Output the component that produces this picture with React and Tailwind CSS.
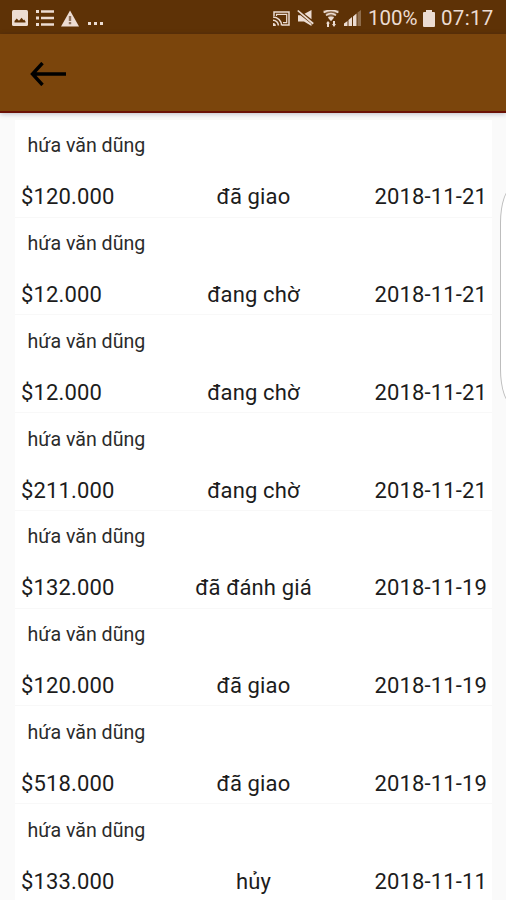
import React from 'react';

const orders = [
  { id: 1, name: 'hứa văn dũng', price: '$120.000', status: 'đã giao', date: '2018-11-21' },
  { id: 2, name: 'hứa văn dũng', price: '$12.000', status: 'đang chờ', date: '2018-11-21' },
  { id: 3, name: 'hứa văn dũng', price: '$12.000', status: 'đang chờ', date: '2018-11-21' },
  { id: 4, name: 'hứa văn dũng', price: '$211.000', status: 'đang chờ', date: '2018-11-21' },
  { id: 5, name: 'hứa văn dũng', price: '$132.000', status: 'đã đánh giá', date: '2018-11-19' },
  { id: 6, name: 'hứa văn dũng', price: '$120.000', status: 'đã giao', date: '2018-11-19' },
  { id: 7, name: 'hứa văn dũng', price: '$518.000', status: 'đã giao', date: '2018-11-19' },
  { id: 8, name: 'hứa văn dũng', price: '$133.000', status: 'hủy', date: '2018-11-11' },
];

const StatusBar = () => (
  <div className="flex h-[34px] items-center bg-[#5e3206] pl-3 pr-3 pt-0.5 text-[#ecdcd2]">
    <svg className="mr-2 h-4 w-4" viewBox="0 0 16 16">
      <rect width="16" height="16" rx="1.5" fill="currentColor" />
      <path d="M2.5 12.5V11l2.2-2.5 2.3 2.3 2.6-3 2 2.4.6-.6 1.3 2v.9z" fill="#5e3206" />
    </svg>
    <svg className="mr-[7px] h-4 w-[18px]" viewBox="0 0 18 16" fill="currentColor">
      <path d="M0 0h3v3H0zM0 6.5h3v3H0zM0 13h3v3H0zM5 .3h13v2.4H5zM5 6.8h13v2.4H5zM5 13.3h13v2.4H5z" />
    </svg>
    <svg className="mr-[9px] h-[17px] w-[18px]" viewBox="0 0 18 16">
      <path d="M9 0 18 16H0z" fill="currentColor" />
      <path d="M7.8 5.5h2.4v5H7.8zM7.8 11.5h2.4v2.2H7.8z" fill="#8d705a" />
    </svg>
    <span className="flex gap-[3px] pt-[11px]">
      <i className="h-[3px] w-[3px] bg-current" />
      <i className="h-[3px] w-[3px] bg-current" />
      <i className="h-[3px] w-[3px] bg-current" />
    </span>

    <div className="ml-auto flex items-center">
      <svg className="mr-[7px] h-[15px] w-[17px]" viewBox="0 0 17 15" fill="none" stroke="currentColor">
        <path d="M1 5V1h15v13H9" strokeWidth="1.5" />
        <path d="M3.5 5V3.3h10.2v8.4H10" strokeWidth="1.2" />
        <path d="M0 6a8.6 8.6 0 0 1 8.6 8.6M0 9.2a5.4 5.4 0 0 1 5.4 5.4" strokeWidth="1.6" />
        <path d="M0 12a2.6 2.6 0 0 1 2.8 3H0z" fill="currentColor" stroke="none" />
      </svg>
      <svg className="mr-[9px] h-4 w-[17px]" viewBox="0 0 17 16" fill="currentColor">
        <path d="M7.5 3.8 14.5 0v9.2zM3.5 5.2 14.5 14v2L7 11.5H1V5.2z" />
        <path d="M.2 1 1.4 0l15.4 13-1.2 1.4z" />
      </svg>
      <svg className="mr-[5px] h-[17px] w-4" viewBox="0 0 16 17" fill="none" stroke="currentColor" strokeWidth="1.8">
        <path d="M0 0h16L8 10z" fill="currentColor" opacity=".3" stroke="none" />
        <path d="M.6 2.6C4.8-.4 11.2-.4 15.4 2.6M3 5.4a8 8 0 0 1 10 0" />
        <path d="M4.8 7.5q3.2-2 6.4 0L8 11.3z" fill="currentColor" stroke="none" />
        <path d="M3 13.6 5 11l2 2.6H6V17H4v-3.4zM9 14h1v-3h2v3h1l-2 3z" fill="currentColor" stroke="none" />
      </svg>
      <svg className="mr-[7px] h-4 w-[17px]" viewBox="0 0 17 16" fill="currentColor">
        <path d="M0 13.5 3.5 11v5H0zM4.5 10 8 7v9H4.5zM9 6.5 12.5 3.5V16H9z" />
        <path d="M13.5 2.5 17 0v16h-3.5z" opacity=".35" />
      </svg>
      <span className="w-[52px] whitespace-nowrap text-[20.5px] leading-none">100%</span>
      <svg className="ml-[3px] mr-1.5 h-[17px] w-3" viewBox="0 0 12 17" fill="currentColor">
        <path d="M3 0h6v2h2q1 0 1 1v13q0 1-1 1H1q-1 0-1-1V3q0-1 1-1h2z" />
      </svg>
      <span className="w-[53px] whitespace-nowrap text-[20.5px] leading-none tracking-[0.3px]">07:17</span>
    </div>
  </div>
);

const OrderRow = ({ order }) => (
  <li className="h-[97.75px] border-b border-[#f8f8f8] bg-white text-[#1c1c1c]">
    <p className="ml-[12.5px] pt-[13.5px] text-[19.6px] leading-[26px] text-[#2b2b2b]">{order.name}</p>
    <div className="ml-1.5 mr-[5px] mt-6 flex text-[22px] leading-7 tracking-[0.15px]">
      <span className="w-[155px]">{order.price}</span>
      <span className="w-[155px] text-center">{order.status}</span>
      <span className="flex-1 text-right">{order.date}</span>
    </div>
  </li>
);

const App = () => {
  return (
    <div className="relative h-[900px] w-[506px] overflow-hidden bg-[#fafafa] font-['Roboto','Noto_Sans',sans-serif]">
      <StatusBar />
      <header className="relative flex h-[79px] items-center border-b-2 border-[#6b1206] bg-[#7b450c] pl-[30px] pt-[3px] shadow-[0_1px_5px_rgba(0,0,50,0.25)]">
        <svg className="h-6 w-9" viewBox="0 0 36 24" fill="none" stroke="#000" strokeWidth="3.4">
          <path d="M36 12H2.5M12.5 1 2.5 12l10 11" />
        </svg>
      </header>

      <ul className="ml-[15px] mr-3.5 pt-[6.8px]">
        {orders.map((order) => (
          <OrderRow key={order.id} order={order} />
        ))}
      </ul>

      {/* edge panel handle */}
      <div className="absolute -right-5 top-[187px] h-[218px] w-[26px] rounded-[13px/36px] border border-[#bdbdbd] bg-white" />
    </div>
  );
};

export default App;
